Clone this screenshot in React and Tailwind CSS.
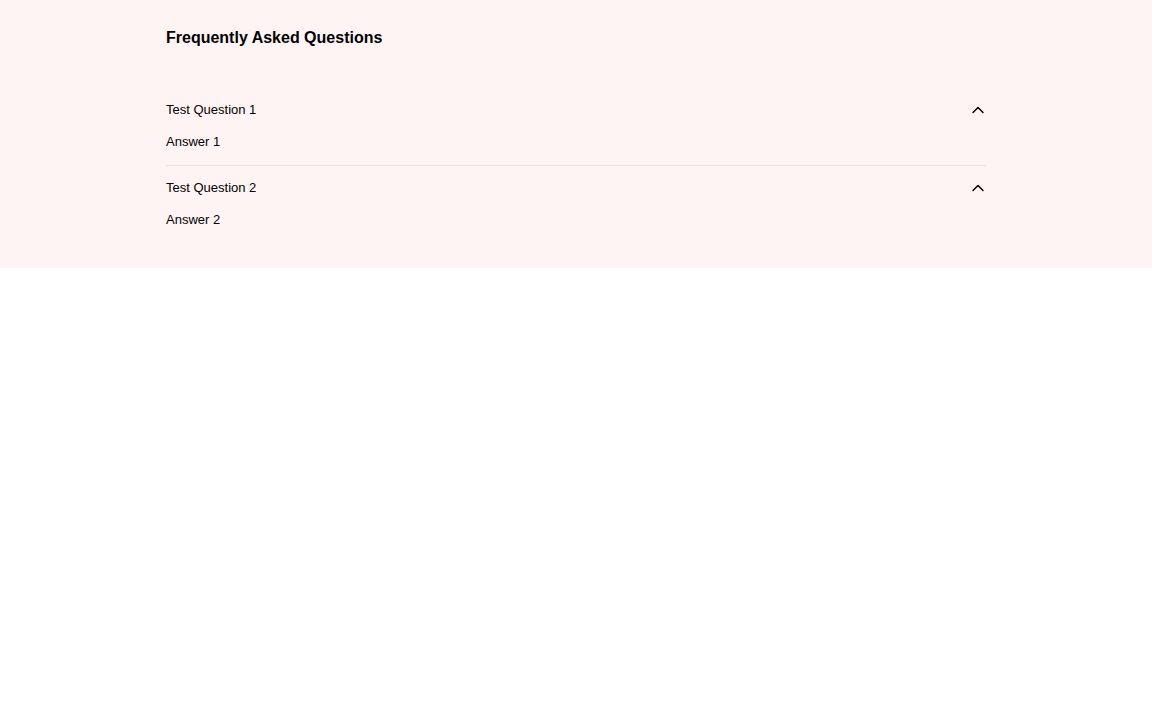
import React from "react";

function Chevron() {
  return (
    <svg viewBox="0 0 24 24" fill="none" stroke="currentColor" strokeWidth="2.2" className="w-4 h-4 shrink-0" aria-hidden="true">
      <path strokeLinecap="round" strokeLinejoin="round" d="m4.5 15.75 7.5-7.5 7.5 7.5" />
    </svg>
  );
}

const items = [
  { q: "Test Question 1", a: "Answer 1" },
  { q: "Test Question 2", a: "Answer 2" },
];

export default function App() {
  return (
    <div className="bg-[#fff4f4] w-full" style={{ fontFamily: '"Liberation Sans", Arial, sans-serif' }}>
      <div className="w-[820px] mx-auto pt-[26px] pb-[24px] text-black">
        <h2 className="text-[16px] leading-6 font-bold mb-[38px]">Frequently Asked Questions</h2>
        <div>
          {items.map((it, i) => (
            <div key={i} className={i < items.length - 1 ? "border-b border-[#ebe4e4] pb-[13px]" : "pb-[14px]"}>
              <button className="w-full flex items-center justify-between pt-3 pb-3 text-left text-[13px] leading-5">
                <span>{it.q}</span>
                <Chevron />
              </button>
              <div className="text-[13px] leading-5">{it.a}</div>
            </div>
          ))}
        </div>
      </div>
    </div>
  );
}
